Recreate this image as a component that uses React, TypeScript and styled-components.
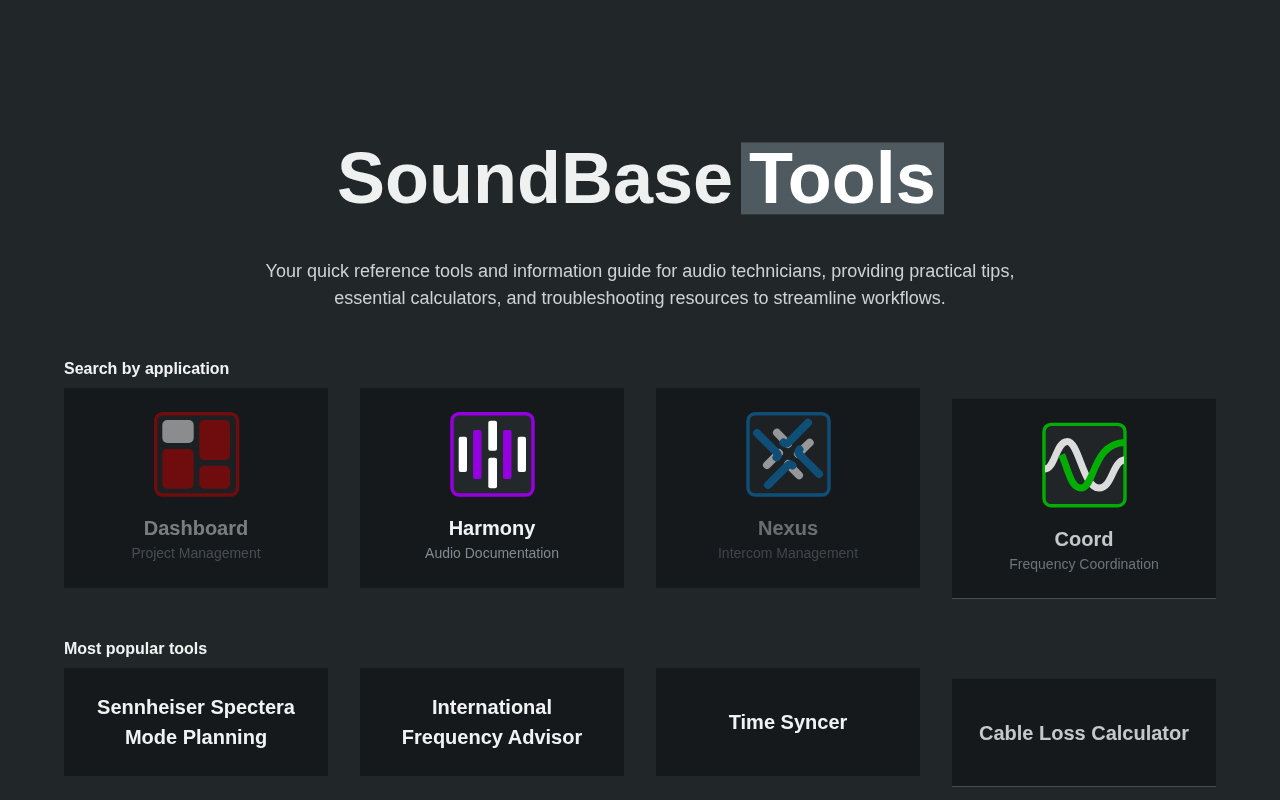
import React from "react";
import styled, { createGlobalStyle } from "styled-components";

const Global = createGlobalStyle`
  html, body { margin: 0; padding: 0; height: 800px; overflow: hidden; background: #212629; }
  body { font-family: "Liberation Sans", Arial, sans-serif; color: #f1f3f3; }
`;

const Page = styled.main`
  padding: 142px 64px 0;
`;

const Hero = styled.header`
  display: flex;
  flex-direction: column;
  align-items: center;
`;

const Title = styled.h1`
  display: flex;
  justify-content: center;
  gap: 8px;
  margin: 0;
  font-size: 72px;
  line-height: 72px;
  font-weight: 700;
  color: #eff1f1;
  will-change: transform;
  transform: translateY(0.4px);
`;

const Highlight = styled.span`
  padding: 0 8px;
  background: #4f5a60;
  color: #fff;
`;

const Lead = styled.p`
  margin: 44px 0 45px;
  width: 800px;
  text-align: center;
  font-size: 18px;
  line-height: 27px;
  color: #ced2d4;
  will-change: transform;
`;

const SectionTitle = styled.h2`
  margin: 0 0 7px;
  font-size: 16px;
  line-height: 24px;
  font-weight: 700;
  color: #f1f3f3;
  will-change: transform;
`;

const Grid = styled.div`
  display: grid;
  grid-template-columns: repeat(4, 264px);
  gap: 32px;
  margin-bottom: 49px;
`;

const AppCard = styled.a<{ $shift?: number }>`
  display: flex;
  flex-direction: column;
  align-items: center;
  box-sizing: border-box;
  height: 200px;
  padding-top: 24px;
  background: #16191c;
  will-change: transform;
  transform: translateY(${(p) => p.$shift ?? 0}px);
`;

const Faded = styled.div<{ $opacity: number }>`
  display: flex;
  flex-direction: column;
  align-items: center;
  opacity: ${(p) => p.$opacity};
`;

const IconBox = styled.svg<{ $opacity: number }>`
  display: block;
  width: 84px;
  height: 85px;
  margin-bottom: 16px;
  overflow: visible;
  opacity: ${(p) => p.$opacity};
`;

const AppName = styled.div`
  font-size: 20px;
  line-height: 30px;
  font-weight: 700;
  color: #f1f3f3;
`;

const AppSub = styled.div`
  font-size: 14px;
  line-height: 21px;
  color: #7f8b90;
`;

const ToolCard = styled.a<{ $shift?: number }>`
  display: flex;
  align-items: center;
  justify-content: center;
  box-sizing: border-box;
  height: 108px;
  padding: 24px;
  background: #16191c;
  text-align: center;
  will-change: transform;
  transform: translateY(${(p) => p.$shift ?? 0}px);
`;

const ToolName = styled.div<{ $opacity?: number }>`
  font-size: 20px;
  line-height: 30px;
  font-weight: 700;
  color: #f1f3f3;
  opacity: ${(p) => p.$opacity ?? 1};
`;

const Frame = ({ color, wide }: { color: string; wide?: boolean }) => (
  <rect
    x={wide ? 1.7 : 2}
    y="1.7"
    width={wide ? 81.9 : 81}
    height="81.3"
    rx="7"
    fill="#23282b"
    stroke={color}
    strokeWidth="3.4"
  />
);

const DashboardIcon = () => (
  <IconBox viewBox="0 0 84 85" $opacity={0.5}>
    <Frame color="#c80000" wide />
    <rect x="8.3" y="8" width="31.4" height="23" rx="5" fill="#fff" />
    <rect x="45.3" y="8" width="30.7" height="40" rx="5" fill="#c80000" />
    <rect x="8.3" y="37" width="31.4" height="39.7" rx="5" fill="#c80000" />
    <rect x="45.3" y="53.7" width="30.7" height="23" rx="5" fill="#c80000" />
  </IconBox>
);

const HarmonyIcon = () => (
  <IconBox viewBox="0 0 84 85" $opacity={1}>
    <Frame color="#9400e0" />
    <rect x="8.7" y="24.7" width="8.3" height="35.3" rx="2" fill="#fff" />
    <rect x="23" y="18" width="8.5" height="49" rx="2" fill="#9400e0" />
    <rect x="38.3" y="8.7" width="8.7" height="30" rx="2" fill="#fff" />
    <rect x="38.3" y="45.7" width="8.7" height="30.6" rx="2" fill="#fff" />
    <rect x="53" y="18" width="8.5" height="49" rx="2" fill="#9400e0" />
    <rect x="67.7" y="24.7" width="8.3" height="35.3" rx="2" fill="#fff" />
  </IconBox>
);

const NexusIcon = () => (
  <IconBox viewBox="0 0 84 85" $opacity={0.55}>
    <Frame color="#097bc3" />
    <g fill="none" strokeWidth="8" strokeLinecap="round" strokeLinejoin="round">
      <path d="M21 53 L33 41" stroke="#fff" />
      <path d="M31 20.7 L42 32" stroke="#fff" />
      <path d="M63.7 30.7 L52 42" stroke="#fff" />
      <path d="M53 63.3 L42 52" stroke="#fff" />
      <path d="M11 21 L30 40 Q33 43 30.5 45.5" stroke="#097bc3" />
      <path d="M62 10.7 L43 30 Q40 33 37.5 30.5" stroke="#097bc3" />
      <path d="M73 62 L54 43 Q51 40 53.5 37.5" stroke="#097bc3" />
      <path d="M22 73 L41 54 Q44 51 46.5 53.5" stroke="#097bc3" />
    </g>
  </IconBox>
);

const CoordIcon = () => (
  <IconBox viewBox="0 0 84 85" $opacity={0.85}>
    <defs>
      <clipPath id="coord-clip">
        <rect x="3" y="3" width="79" height="79" rx="6" />
      </clipPath>
    </defs>
    <Frame color="#00c800" />
    <g clipPath="url(#coord-clip)" fill="none" strokeWidth="7">
      <path d="M3 46.3 C13 46.3 14 18.7 25.3 18.7 C37 18.7 41 65.3 57 65.3 C71 65.3 70 37 84 37" stroke="#fff" />
      <path d="M19.7 32 C26 47 29 65.3 39 65.3 C53 65.3 50 19.7 84 19.7" stroke="#00c800" strokeLinecap="butt" />
    </g>
  </IconBox>
);

const apps = [
  { name: "Dashboard", sub: "Project Management", icon: <DashboardIcon />, opacity: 0.46, shift: 0 },
  { name: "Harmony", sub: "Audio Documentation", icon: <HarmonyIcon />, opacity: 1, shift: 0 },
  { name: "Nexus", sub: "Intercom Management", icon: <NexusIcon />, opacity: 0.39, shift: 0 },
  { name: "Coord", sub: "Frequency Coordination", icon: <CoordIcon />, opacity: 0.8, shift: 10.7 },
];

const tools = [
  { lines: ["Sennheiser Spectera", "Mode Planning"], opacity: 1, shift: 0 },
  { lines: ["International", "Frequency Advisor"], opacity: 1, shift: 0 },
  { lines: ["Time Syncer"], opacity: 1, shift: 0 },
  { lines: ["Cable Loss Calculator"], opacity: 0.8, shift: 10.7 },
];

export default function App() {
  return (
    <>
      <Global />
      <Page>
        <Hero>
          <Title>
            <span>SoundBase</span>
            <Highlight>Tools</Highlight>
          </Title>
          <Lead>
            Your quick reference tools and information guide for audio technicians, providing practical tips,
            essential calculators, and troubleshooting resources to streamline workflows.
          </Lead>
        </Hero>
        <SectionTitle>Search by application</SectionTitle>
        <Grid>
          {apps.map((a) => (
            <AppCard key={a.name} $shift={a.shift}>
              {a.icon}
              <Faded $opacity={a.opacity}>
                <AppName>{a.name}</AppName>
                <AppSub>{a.sub}</AppSub>
              </Faded>
            </AppCard>
          ))}
        </Grid>
        <SectionTitle>Most popular tools</SectionTitle>
        <Grid>
          {tools.map((t) => (
            <ToolCard key={t.lines[0]} $shift={t.shift}>
              <ToolName $opacity={t.opacity}>
                {t.lines.map((l) => (
                  <div key={l}>{l}</div>
                ))}
              </ToolName>
            </ToolCard>
          ))}
        </Grid>
      </Page>
    </>
  );
}
